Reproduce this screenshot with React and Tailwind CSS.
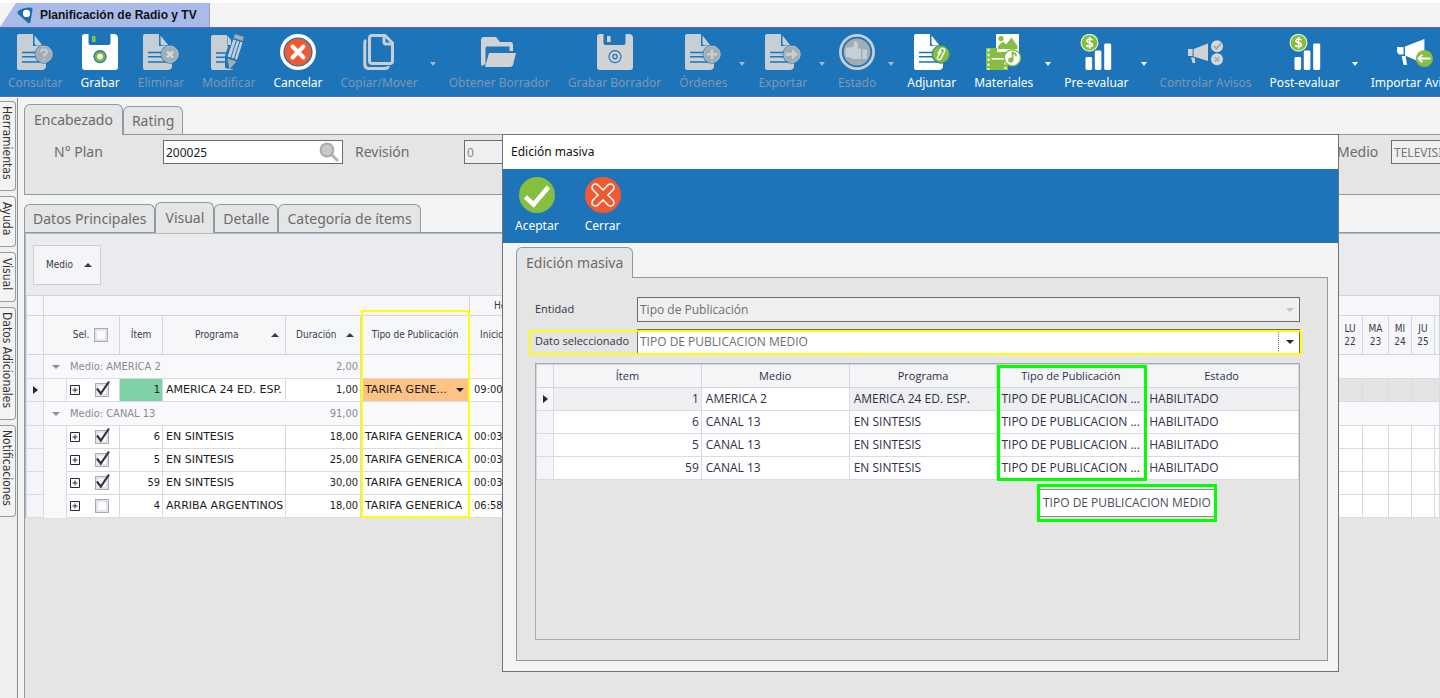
import { useState } from "react";

const BLUE = "#1d74b8";
const GREEN = "#84bf41";
const ORANGE = "#f15a31";

function DocIcon({ off, children }) {
  return (
    <svg width="36" height="36" viewBox="0 0 36 36" aria-hidden="true">
      <path
        d="M2 0H16V12H29V33Q28 36 25 36H2Q0 36 0 34V2Q0 0 2 0Z"
        fill={off ? "#c6cfd6" : "#fff"}
      />
      <path d="M16 0H30V13H26L17 3V12H16Z" fill={BLUE} />
      <path d="M17.5 1.5L25.5 11.5H20Q17.5 11.5 17.5 9Z" fill={off ? "#c6cfd6" : "#fff"} />
      <path d="M5 18.5H20M5 22.8H20M5 28H27" stroke={BLUE} strokeWidth="1.6" fill="none" />
      <circle cx="27" cy="20.3" r="9.4" fill={BLUE} />
      <circle cx="27" cy="20.3" r="8.2" fill={off ? "#a2acb3" : GREEN} stroke={off ? "#bcc4ca" : "#6fae2c"} />
      {children}
    </svg>
  );
}

function ConsultarIcon() {
  return (
    <DocIcon off>
      <path d="M24 18Q24 15.6 27 15.6T30 18Q30 19.6 27.2 21V22.6M27.2 24.4V26" stroke="#c6cfd6" strokeWidth="2" fill="none" />
    </DocIcon>
  );
}

function EliminarIcon() {
  return (
    <DocIcon off>
      <path d="M24 17.3L30 23.3M30 17.3L24 23.3" stroke="#d3dade" strokeWidth="2.6" fill="none" />
    </DocIcon>
  );
}

function OrdenesIcon() {
  return (
    <DocIcon off>
      <path d="M27 15.3V25.3M22 20.3H32" stroke="#c6cfd6" strokeWidth="2.6" fill="none" />
    </DocIcon>
  );
}

function ExportarIcon() {
  return (
    <DocIcon off>
      <path d="M21 18.8H27V15L33 20.3L27 25.6V21.8H21Z" fill="#c6cfd6" />
    </DocIcon>
  );
}

function AdjuntarIcon() {
  return (
    <DocIcon>
      <path
        d="M24 20L26.5 15.5Q28 13.6 29.8 14.6Q31.4 15.8 30.4 17.8L27 24.4Q25.8 26.4 24.2 25.5Q22.8 24.4 23.6 22.8L27.4 17.2"
        stroke="#fff"
        strokeWidth="1.4"
        fill="none"
      />
    </DocIcon>
  );
}

function DiskIcon({ off }) {
  const body = off ? "#d0d2d4" : "#fff";
  return (
    <svg width="36" height="36" viewBox="0 0 36 36" aria-hidden="true">
      <path d="M3 0H6.5V9Q6.5 11 8.5 11H26.5Q28.5 11 28.5 9V0H33Q36 1 36 4V33Q36 36 33 36H3Q0 36 0 33V3Q0 0 3 0Z" fill={body} />
      <path d="M10 2H13.6V8H10Z" fill={off ? body : GREEN} />
      <circle cx="18" cy="22.6" r="6.6" fill={BLUE} />
      <circle cx="18" cy="22.6" r="5.4" fill={off ? body : "#7cbb2f"} />
      <circle cx="18" cy="22.6" r="2.8" fill={off ? BLUE : "#fff"} />
      <circle cx="18" cy="22.6" r="1.5" fill={body} />
    </svg>
  );
}

function DiskOffIcon() {
  return <DiskIcon off />;
}

function ModificarIcon() {
  return (
    <svg width="36" height="36" viewBox="0 0 36 36" aria-hidden="true">
      <path d="M2 1H16V12H24V34Q24 36 22 36H2Q0 36 0 34V3Q0 1 2 1Z" fill="#c6cfd6" />
      <path d="M5 19H19M5 23.3H19M5 28H19" stroke={BLUE} strokeWidth="1.6" />
      <path d="M21 0H35V10L24 36L14 34V22Z" fill={BLUE} />
      <path d="M16.5 1.5L20 6V11H16.5Z" fill="#c6cfd6" />
      <path d="M24 0L33 3L31.8 7L22.6 4Z" fill="#a2acb3" />
      <path d="M22.2 5.4L25 6.3L19.5 23.5L16.6 22.5ZM25.9 6.6L28.3 7.4L22.8 24.6L20.4 23.8ZM29.2 7.7L31.6 8.5L26 25.7L23.7 24.9Z" fill="#c6cfd6" />
      <path d="M16.4 24.6L25.4 27.4L18.4 35.4Z" fill="#a2acb3" />
    </svg>
  );
}

function CancelarIcon() {
  return (
    <svg width="36" height="36" viewBox="0 0 36 36" aria-hidden="true">
      <circle cx="18" cy="18" r="18" fill="#fff" />
      <circle cx="18" cy="18" r="14.6" fill={BLUE} />
      <circle cx="18" cy="18" r="13.4" fill={ORANGE} />
      <path d="M12.5 12.5L23.5 23.5M23.5 12.5L12.5 23.5" stroke="#fff" strokeWidth="4" strokeLinecap="round" />
    </svg>
  );
}

function CopiarIcon() {
  return (
    <svg width="32" height="36" viewBox="0 0 32 36" aria-hidden="true" fill="none" stroke="#c6cfd6" strokeWidth="3">
      <path d="M9 1.5H22L29.5 9V27Q29.5 29.5 27 29.5H9Q6.5 29.5 6.5 27V4Q6.5 1.5 9 1.5Z" />
      <path d="M21 2V8Q21 10 23 10H29" />
      <path d="M3 6Q1.8 7 1.8 9V30Q1.8 34.5 6 34.5H22Q25 34.5 25.6 32" />
    </svg>
  );
}

function FolderIcon() {
  return (
    <svg width="36" height="36" viewBox="0 0 36 36" aria-hidden="true">
      <path d="M1 32Q0 31 0 29V6Q0 3 3 3H15L19 8H29Q32 8 32 11V17H28.5V12.5H6Q4.5 12.5 4.5 14V30Z" fill="#d0d2d4" />
      <path d="M8 19H35L32 31Q31.4 33 29 33H4Z" fill="#d0d2d4" />
    </svg>
  );
}

function EstadoIcon() {
  return (
    <svg width="36" height="36" viewBox="0 0 36 36" aria-hidden="true">
      <circle cx="18" cy="18" r="18" fill="#c6cfd6" />
      <circle cx="18" cy="18" r="15.2" fill={BLUE} />
      <circle cx="18" cy="18" r="13.4" fill="#a2acb3" />
      <path d="M7 13.5H12L15 12V7Q18 7 19 10.5V14.5H22V25H14L10 23H7Q5.6 18 7 13.5ZM23.4 15.5H28V25H23.4Z" fill="#c6cfd6" />
    </svg>
  );
}

function MaterialesIcon() {
  return (
    <svg width="36" height="36" viewBox="0 0 36 36" aria-hidden="true">
      <path d="M10 0H33V18H10Z" fill="#fff" />
      <circle cx="15" cy="4.6" r="2.6" fill={GREEN} />
      <path d="M12 15V12L17 7.5L20 10.5L25.5 3.5L31.5 12V15Z" fill={GREEN} />
      <path d="M0 14H11V18H22V36H0Z" fill={GREEN} />
      <path d="M2.5 15V36M19.5 28V36" stroke="#fff" strokeWidth="2" strokeDasharray="2.4 2.4" />
      <path d="M5.5 24.8H18" stroke="#fff" strokeWidth="1.6" />
      <circle cx="26.4" cy="23.8" r="8.8" fill={GREEN} />
      <circle cx="26.4" cy="23.8" r="7.4" fill="#fff" />
      <circle cx="24.8" cy="26" r="2.6" fill={GREEN} />
      <path d="M26.6 26V18.4Q30.4 19.4 30 22.4" stroke={GREEN} strokeWidth="1.8" fill="none" />
    </svg>
  );
}

function ChartIcon() {
  return (
    <svg width="32" height="36" viewBox="0 0 32 36" aria-hidden="true">
      <circle cx="9.5" cy="8.7" r="8.4" fill={GREEN} stroke="#e4f1d4" strokeWidth="1.2" />
      <path d="M12.4 6.2Q11.8 4.9 9.6 4.9T6.9 6.8Q6.9 8.3 9.6 8.7T12.4 10.7Q12.4 12.6 9.6 12.6T6.7 11.1M9.6 3V14.4" stroke="#fff" strokeWidth="1.5" fill="none" />
      <rect x="5.5" y="23" width="6.6" height="13" rx="1.4" fill="#fff" />
      <rect x="14.8" y="16.5" width="6.6" height="19.5" rx="1.4" fill="#fff" />
      <rect x="24.2" y="9.5" width="7" height="26.5" rx="1.4" fill="#fff" />
    </svg>
  );
}

function AvisosIcon() {
  return (
    <svg width="36" height="36" viewBox="0 0 36 36" aria-hidden="true">
      <path d="M0 15H4.6V22H0ZM5.6 15L20 9.5V27L5.6 22.4ZM3 23.5H6.6L7.4 29H4.6Z" fill="#d0d2d4" />
      <circle cx="29" cy="12.3" r="6" fill="#d3d8dc" />
      <path d="M25.8 12L28.4 14.8L33 9.4" stroke="#a2acb3" strokeWidth="2" fill="none" />
      <circle cx="29" cy="25.3" r="6" fill="#d3d8dc" />
      <path d="M26.8 23.1L31.2 27.5M31.2 23.1L26.8 27.5" stroke="#a2acb3" strokeWidth="1.6" />
    </svg>
  );
}

function ImportarIcon() {
  return (
    <svg width="36" height="36" viewBox="0 0 36 36" aria-hidden="true">
      <path d="M0 13H6.6V20.6H2L0 18ZM8 12.4L27.4 5V30L8 21.4ZM4.6 22H8.6L10 31H6.6Z" fill="#fff" />
      <circle cx="27.4" cy="24.5" r="8.6" fill={GREEN} />
      <path d="M33.4 24.5H21.6M25.4 20.6L21.4 24.5L25.4 28.4" stroke="#fff" strokeWidth="1.8" fill="none" />
    </svg>
  );
}

function AceptarIcon() {
  return (
    <svg width="36" height="36" viewBox="0 0 36 36" aria-hidden="true">
      <circle cx="18" cy="18" r="18" fill={GREEN} />
      <path d="M6.4 20L14.6 27.4L29.4 10" stroke="#fff" strokeWidth="4.6" fill="none" />
    </svg>
  );
}

function CerrarIcon() {
  return (
    <svg width="36" height="36" viewBox="0 0 36 36" aria-hidden="true">
      <circle cx="18" cy="18" r="18" fill={ORANGE} />
      <path d="M10.5 10.5L25.5 25.5M25.5 10.5L10.5 25.5" stroke="#fff" strokeWidth="8.6" strokeLinecap="round" />
      <path d="M10.5 10.5L25.5 25.5M25.5 10.5L10.5 25.5" stroke={ORANGE} strokeWidth="5.4" strokeLinecap="round" />
    </svg>
  );
}

function Arrow({ dir, className }) {
  const shapes = { up: "M0 4L4 0L8 4Z", down: "M0 0H8L4 4Z" };
  return (
    <svg width="8" height="4" viewBox="0 0 8 4" className={className} aria-hidden="true">
      <path d={shapes[dir]} fill="currentColor" />
    </svg>
  );
}

function RowPointer() {
  return (
    <svg width="5" height="8" viewBox="0 0 5 8" className="mx-auto" aria-hidden="true">
      <path d="M0 0L5 4L0 8Z" fill="#26263a" />
    </svg>
  );
}

const tools = [
  { label: "Consultar", icon: ConsultarIcon, off: true },
  { label: "Grabar", icon: DiskIcon },
  { label: "Eliminar", icon: EliminarIcon, off: true },
  { label: "Modificar", icon: ModificarIcon, off: true },
  { label: "Cancelar", icon: CancelarIcon },
  { label: "Copiar/Mover", icon: CopiarIcon, off: true, menu: true },
  { label: "Obtener Borrador", icon: FolderIcon, off: true },
  { label: "Grabar Borrador", icon: DiskOffIcon, off: true },
  { label: "Órdenes", icon: OrdenesIcon, off: true, menu: true },
  { label: "Exportar", icon: ExportarIcon, off: true, menu: true },
  { label: "Estado", icon: EstadoIcon, off: true, menu: true },
  { label: "Adjuntar", icon: AdjuntarIcon },
  { label: "Materiales", icon: MaterialesIcon, menu: true },
  { label: "Pre-evaluar", icon: ChartIcon, menu: true },
  { label: "Controlar Avisos", icon: AvisosIcon, off: true },
  { label: "Post-evaluar", icon: ChartIcon, menu: true },
  { label: "Importar Avisos", icon: ImportarIcon },
];

function Toolbar() {
  return (
    <div className="flex h-[70px] shrink-0 items-start overflow-hidden border-y border-[#5b68b8] bg-[#1d74b8] pl-2 pt-1.5 font-['Noto_Sans',sans-serif] text-xs">
      {tools.map(({ label, icon: Icon, off, menu }) => (
        <div key={label} className={off ? "flex shrink-0 text-[#7f97b0]" : "flex shrink-0 text-white"}>
          <button disabled={off} className="mr-[18px] flex flex-col items-center gap-1">
            <Icon />
            <span className="whitespace-nowrap leading-[18px]">{label}</span>
          </button>
          {menu && (
            <button disabled={off} aria-label={`Opciones de ${label}`} className="-ml-1.5 mr-[11px] mt-6 w-2 self-start py-1">
              <svg width="6" height="4" viewBox="0 0 6 4" aria-hidden="true">
                <path d="M0 0H6L3 4Z" fill={off ? "#a9b8c6" : "#fff"} />
              </svg>
            </button>
          )}
        </div>
      ))}
    </div>
  );
}

const sideTabs = [
  { label: "Herramientas", h: "h-[90px]" },
  { label: "Ayuda", h: "h-[51px]" },
  { label: "Visual", h: "h-[50px]" },
  { label: "Datos Adicionales", h: "h-[113px]" },
  { label: "Notificaciones", h: "h-[92px]" },
];

function SideTabs() {
  return (
    <div className="flex w-[18px] shrink-0 flex-col gap-[5px] border-r border-[#8d8d8d] bg-[#efefef] pr-px pt-[3px]">
      {sideTabs.map((t) => (
        <button
          key={t.label}
          className={`${t.h} flex w-4 items-center rounded-r border border-l-0 border-[#9b9b9b] bg-[#f3f3f3] pb-1.5 font-['DejaVu_Sans_Condensed','DejaVu_Sans',sans-serif] text-xs text-[#333]`}
        >
          <span className="whitespace-nowrap leading-[14px] [writing-mode:vertical-rl]">{t.label}</span>
        </button>
      ))}
    </div>
  );
}

function Tabs({ items, active, onSelect }) {
  return (
    <div role="tablist" className="relative flex items-end font-['Noto_Sans',sans-serif] text-sm text-[#6b6b6b]">
      {items.map((name) => (
        <button
          key={name}
          role="tab"
          aria-selected={name === active}
          onClick={() => onSelect(name)}
          className={
            name === active
              ? "-mb-px h-[31px] rounded-t-md border border-b-0 border-[#8b9ba3] bg-[#e5e5e5] px-[9px]"
              : "h-[28px] rounded-t-md border border-b-0 border-[#8b9ba3] bg-[#e5e5e5] px-2"
          }
        >
          {name}
        </button>
      ))}
    </div>
  );
}

function Header() {
  const [tab, setTab] = useState("Encabezado");
  return (
    <section>
      <Tabs items={["Encabezado", "Rating"]} active={tab} onSelect={setTab} />
      <div className="h-[61px] overflow-hidden border border-r-0 border-[#8b9ba3] bg-[#e5e5e5] pl-[29px] pt-[5px]">
        <div className="flex items-center font-['Noto_Sans',sans-serif] text-sm text-[#6b6b6b]">
          <label htmlFor="plan" className="w-[109px] shrink-0">N° Plan</label>
          <div className="relative shrink-0">
            <input id="plan" defaultValue="200025" className="block h-6 w-[180px] border border-[#6b6b6b] bg-white pl-0.5 text-xs text-[#222]" />
            <svg width="20" height="20" viewBox="0 0 20 20" className="absolute right-1 top-0.5" aria-hidden="true">
              <path d="M12 12L18 18" stroke="#b3b3b3" strokeWidth="3" strokeLinecap="round" />
              <circle cx="8" cy="8" r="6.4" fill="#c9c9c9" stroke="#a9a9a9" strokeWidth="2" />
            </svg>
          </div>
          <label htmlFor="revision" className="ml-3 w-[109px] shrink-0">Revisión</label>
          <input id="revision" readOnly value="0" className="h-6 w-[180px] shrink-0 border border-[#6b6b6b] bg-[#f0f0f0] pl-0.5 text-xs text-[#888]" />
          <div className="flex-1" />
          <label htmlFor="medio" className="w-[54px] shrink-0">Medio</label>
          <input id="medio" readOnly value="TELEVISION" className="h-6 w-[49px] shrink-0 border border-r-0 border-[#6b6b6b] bg-[#f0f0f0] pl-0.5 text-xs text-[#777]" />
        </div>
      </div>
    </section>
  );
}

function Check({ label, ...props }) {
  return (
    <label className="relative inline-block size-[14px] align-middle">
      <input
        type="checkbox"
        aria-label={label}
        className="peer block size-[14px] appearance-none border border-[#a9aab8] bg-white shadow-[inset_0_0_0_2px_#e3e3ea]"
        {...props}
      />
      <svg width="16" height="18" viewBox="0 0 16 18" className="pointer-events-none absolute -top-1 left-0 hidden peer-checked:block" aria-hidden="true">
        <path d="M2 9.5L5.8 14.5L14 2.5" stroke="#33344a" strokeWidth="2.2" fill="none" />
      </svg>
    </label>
  );
}

const groups = [
  {
    name: "AMERICA 2",
    total: "2,00",
    rows: [{ item: 1, programa: "AMERICA 24 ED. ESP.", duracion: "1,00", inicio: "09:00", sel: true, current: true }],
  },
  {
    name: "CANAL 13",
    total: "91,00",
    rows: [
      { item: 6, programa: "EN SINTESIS", duracion: "18,00", inicio: "00:03", sel: true },
      { item: 5, programa: "EN SINTESIS", duracion: "25,00", inicio: "00:03", sel: true },
      { item: 59, programa: "EN SINTESIS", duracion: "30,00", inicio: "00:03", sel: true },
      { item: 4, programa: "ARRIBA ARGENTINOS", duracion: "18,00", inicio: "06:58", sel: false },
    ],
  },
];

const days = [
  ["LU", 22],
  ["MA", 23],
  ["MI", 24],
  ["JU", 25],
];

const th = "border border-[#d3d4de] p-0 font-normal";
const td = "overflow-hidden border border-[#d9dae4] p-0 whitespace-nowrap";
const wide = "font-['DejaVu_Sans',sans-serif]";

function PlanRow({ row }) {
  return (
    <tr className="h-[23px] bg-white text-[#1c1c1c]">
      <td className={`${td} bg-[#f4f5f8]`}>{row.current && <RowPointer />}</td>
      <td className={`${td} border-y-0 bg-[#f9f9fb]`} />
      <td className={td}>
        <div className="flex items-center pl-[3px]">
          <button aria-label={`Expandir ítem ${row.item}`} className="mr-[15px]">
            <svg width="10" height="10" viewBox="0 0 10 10" fill="none" stroke="#26263a" aria-hidden="true">
              <path d="M.5 .5H9.5V9.5H.5ZM2.5 5H7.5M5 2.5V7.5" />
            </svg>
          </button>
          <Check label={`Seleccionar ítem ${row.item}`} defaultChecked={row.sel} />
        </div>
      </td>
      <td className={row.current ? `${td} bg-[#7fd1a6] pr-0.5 text-right` : `${td} pr-0.5 text-right`}>{row.item}</td>
      <td className={`${td} ${wide} pl-[3px]`}>{row.programa}</td>
      <td className={`${td} pr-0.5 text-right`}>{row.duracion}</td>
      <td className={row.current ? `${td} ${wide} bg-[#ffc285] pl-1 pr-[3px]` : `${td} ${wide} pl-1 pr-[3px]`}>
        {row.current ? (
          <button className="flex w-full items-center justify-between pr-0.5">
            TARIFA GENE...
            <Arrow dir="down" />
          </button>
        ) : (
          "TARIFA GENERICA"
        )}
      </td>
      <td className={`${td} pl-1`}>{row.inicio}</td>
      <td className={td} />
      {days.map(([d]) => (
        <td key={d} className={row.current ? `${td} bg-[#e4e4e4]` : td} />
      ))}
      <td className={row.current ? `${td} bg-[#e4e4e4]` : td} />
    </tr>
  );
}

function PlanTable() {
  return (
    <div className="relative">
      <table className="w-full table-fixed border-collapse font-['DejaVu_Sans_Condensed','DejaVu_Sans',sans-serif] text-[11px] leading-[14px] text-[#3a3a4c]">
        <colgroup>
          <col className="w-[17px]" />
          <col className="w-[23px]" />
          <col className="w-[53px]" />
          <col className="w-[43px]" />
          <col className="w-[123px]" />
          <col className="w-[75px]" />
          <col className="w-[109px]" />
          <col className="w-[60px]" />
          <col />
          <col className="w-[25px]" />
          <col className="w-[26px]" />
          <col className="w-[23px]" />
          <col className="w-[23px]" />
          <col className="w-[5px]" />
        </colgroup>
        <thead className="bg-[#f6f7f9] text-[10px]">
          <tr className="h-5">
            <th className={th} />
            <th className={th} colSpan={6} />
            <th className={`${th} pl-6 text-left`} colSpan={2}>Horario</th>
            <th className={th} colSpan={5} />
          </tr>
          <tr className="h-[39px]">
            <th className={th} />
            <th className={th} colSpan={2}>
              <div className="flex items-center gap-1 pl-7">
                <span className="w-[18px]">Sel.</span>
                <Check label="Seleccionar todos" />
              </div>
            </th>
            <th className={th}>Ítem</th>
            <th className={th}>
              <div className="flex items-center justify-between pl-8 pr-1.5">
                Programa
                <Arrow dir="up" />
              </div>
            </th>
            <th className={th}>
              <div className="flex items-center justify-between pl-2.5 pr-1.5">
                Duración
                <Arrow dir="up" />
              </div>
            </th>
            <th className={th}>Tipo de Publicación</th>
            <th className={`${th} pl-2.5 text-left`}>Inicio</th>
            <th className={th} />
            {days.map(([d, n]) => (
              <th key={d} className={`${th} leading-[13px]`}>
                {d}
                <br />
                {n}
              </th>
            ))}
            <th className={th} />
          </tr>
        </thead>
        {groups.map((g) => (
          <tbody key={g.name}>
            <tr className="h-6 bg-[#f9f9fb] text-[#8a8b94]">
              <td className={`${td} bg-[#f4f5f8]`} />
              <td className={`${td} border-r-0`} colSpan={4}>
                <button className="flex items-center gap-2.5 pl-2">
                  <Arrow dir="down" />
                  Medio: {g.name}
                </button>
              </td>
              <td className={`${td} border-l-0 pr-0.5 text-right`}>{g.total}</td>
              <td className={td} />
              <td className={td} colSpan={7} />
            </tr>
            {g.rows.map((r) => (
              <PlanRow key={r.item} row={r} />
            ))}
          </tbody>
        ))}
      </table>
      <div className="pointer-events-none absolute bottom-0 left-[335px] top-[15px] w-[109px] border-2 border-[#ffff00]" />
    </div>
  );
}

function Visual() {
  const [tab, setTab] = useState("Visual");
  return (
    <section className="mt-[7px] flex flex-1 flex-col">
      <Tabs items={["Datos Principales", "Visual", "Detalle", "Categoría de ítems"]} active={tab} onSelect={setTab} />
      <div className="flex-1 overflow-hidden border border-b-0 border-r-0 border-[#8b9ba3] bg-[#e5e5e5]">
        <div className="border-l border-t border-[#b4bcc2]">
          <div className="flex h-[61px] items-center bg-[#eaebef] pl-[7px]">
            <button className="flex h-10 w-[68px] items-center justify-between border border-[#cccdd6] bg-[#f5f5f7] pl-3 pr-2 font-['DejaVu_Sans_Condensed','DejaVu_Sans',sans-serif] text-[10px] text-[#3a3a4c]">
              Medio
              <Arrow dir="up" />
            </button>
          </div>
          <PlanTable />
        </div>
      </div>
    </section>
  );
}

const massRows = [
  { item: 1, medio: "AMERICA 2", programa: "AMERICA 24 ED. ESP." },
  { item: 6, medio: "CANAL 13", programa: "EN SINTESIS" },
  { item: 5, medio: "CANAL 13", programa: "EN SINTESIS" },
  { item: 59, medio: "CANAL 13", programa: "EN SINTESIS" },
];

function MassTable() {
  return (
    <div className="relative flex-1 border border-[#a9aab2]">
      <table className="w-full table-fixed border-collapse text-xs leading-4 text-[#2f2f48]">
        <colgroup>
          <col className="w-[17px]" />
          <col className="w-[19.4%]" />
          <col className="w-[19.4%]" />
          <col className="w-[19.4%]" />
          <col className="w-[19.4%]" />
          <col />
        </colgroup>
        <thead className="bg-[#f4f5f7] text-[11px]">
          <tr className="h-[23px]">
            <th className={th} />
            <th className={th}>Ítem</th>
            <th className={th}>Medio</th>
            <th className={th}>Programa</th>
            <th className={th}>Tipo de Publicación</th>
            <th className={th}>Estado</th>
          </tr>
        </thead>
        <tbody>
          {massRows.map((r, i) => (
            <tr key={r.item} className={i === 0 ? "h-[23px] bg-[#eeeff1]" : "h-[23px] bg-white"}>
              <td className={`${td} bg-[#f4f5f8]`}>{i === 0 && <RowPointer />}</td>
              <td className={`${td} pr-0.5 text-right`}>{r.item}</td>
              <td className={`${td} bg-white pl-1`}>{r.medio}</td>
              <td className={`${td} pl-1`}>{r.programa}</td>
              <td className={`${td} pl-1`}>TIPO DE PUBLICACION ...</td>
              <td className={`${td} pl-1`}>HABILITADO</td>
            </tr>
          ))}
        </tbody>
      </table>
      <div className="pointer-events-none absolute left-[461px] top-px h-[116px] w-[150px] border-[3px] border-[#00ff00]" />
      <div className="absolute left-[501px] top-[120px] border-[3px] border-[#00ff00] bg-[#e5e5e5] py-0.5">
        <div className="flex h-7 items-center whitespace-nowrap border-y border-[#8a8a8a] bg-white px-[3px] text-xs text-[#4d4d58]">
          TIPO DE PUBLICACION MEDIO
        </div>
      </div>
    </div>
  );
}

function MassEditDialog() {
  const [tab, setTab] = useState("Edición masiva");
  return (
    <div
      role="dialog"
      aria-label="Edición masiva"
      className="absolute bottom-[26px] left-[502px] right-[101px] top-[131px] flex flex-col border border-[#6f7478] bg-[#f4f4f4] font-['Noto_Sans',sans-serif]"
    >
      <h2 className="flex h-[34px] shrink-0 items-center bg-white pl-2 text-xs text-[#111]">Edición masiva</h2>
      <div className="flex h-[74px] shrink-0 items-start gap-[26px] bg-[#1d74b8] pl-3 pt-2 text-xs text-white">
        <button className="flex flex-col items-center gap-1">
          <AceptarIcon />
          <span className="leading-[18px]">Aceptar</span>
        </button>
        <button className="flex flex-col items-center gap-1">
          <CerrarIcon />
          <span className="leading-[18px]">Cerrar</span>
        </button>
      </div>
      <div className="flex flex-1 flex-col pb-[10px] pl-[13px] pr-[10px] pt-1">
        <Tabs items={["Edición masiva"]} active={tab} onSelect={setTab} />
        <div className="flex flex-1 flex-col border border-[#8b9ba3] bg-[#e5e5e5] pb-5 pl-[18px] pr-[27px] pt-[19px] font-['Open_Sans',sans-serif] text-xs">
          <div className="flex items-center">
            <label htmlFor="entidad" className="w-[102px] text-[11px] text-[#33334a]">Entidad</label>
            <div className="relative flex-1">
              <select id="entidad" disabled className="h-[25px] w-full appearance-none border border-[#6b6b6b] bg-[#f0f0f0] pl-0.5 text-[#6f6f6f] opacity-100">
                <option>Tipo de Publicación</option>
              </select>
              <Arrow dir="down" className="pointer-events-none absolute right-1.5 top-[11px] text-[#c4c4c4]" />
            </div>
          </div>
          <div className="relative mt-[7px] flex items-center">
            <label htmlFor="dato" className="w-[102px] whitespace-nowrap text-[11px] text-[#33334a]">Dato seleccionado</label>
            <div className="relative flex-1">
              <select id="dato" className="h-[25px] w-full appearance-none border border-[#6b6b6b] bg-white pl-0.5 text-[#6f6f6f]">
                <option>TIPO DE PUBLICACION MEDIO</option>
              </select>
              <span className="pointer-events-none absolute bottom-[3px] right-[21px] top-[3px] border-l border-dotted border-[#777]" />
              <Arrow dir="down" className="pointer-events-none absolute right-1.5 top-[11px] text-[#26263a]" />
            </div>
            <div className="pointer-events-none absolute -bottom-px -left-[6px] -right-[2px] top-px border-2 border-[#ffff00]" />
          </div>
          <div className="mt-[9px] flex flex-1">
            <MassTable />
          </div>
        </div>
      </div>
    </div>
  );
}

export default function App() {
  return (
    <div className="relative flex h-screen min-h-[690px] flex-col overflow-hidden border-t-[3px] border-white bg-[#f4f4f4]">
      <header className="flex h-6 shrink-0">
        <h1 className="flex items-center gap-1.5 border-r border-[#8d8d9d] bg-[#a9bce9] pl-4 pr-3 font-['Liberation_Sans',sans-serif] text-xs font-bold text-[#111] [clip-path:polygon(16px_0,100%_0,100%_100%,0_100%)]">
          <svg width="18" height="18" viewBox="0 0 18 18" aria-hidden="true">
            <path d="M2 5Q8 1 15 1.5Q17 2 16.5 4L14.5 16Q13.5 18 11.5 16.5L2 8Q.8 6.4 2 5Z" fill="#1f6ea8" />
            <circle cx="10.5" cy="7.4" r="3.6" fill="#fff" />
          </svg>
          Planificación de Radio y TV
        </h1>
      </header>
      <Toolbar />
      <div className="flex flex-1 border-t border-white">
        <SideTabs />
        <main className="flex min-w-0 flex-1 flex-col pl-1.5 pt-1.5">
          <Header />
          <Visual />
        </main>
      </div>
      <MassEditDialog />
    </div>
  );
}
